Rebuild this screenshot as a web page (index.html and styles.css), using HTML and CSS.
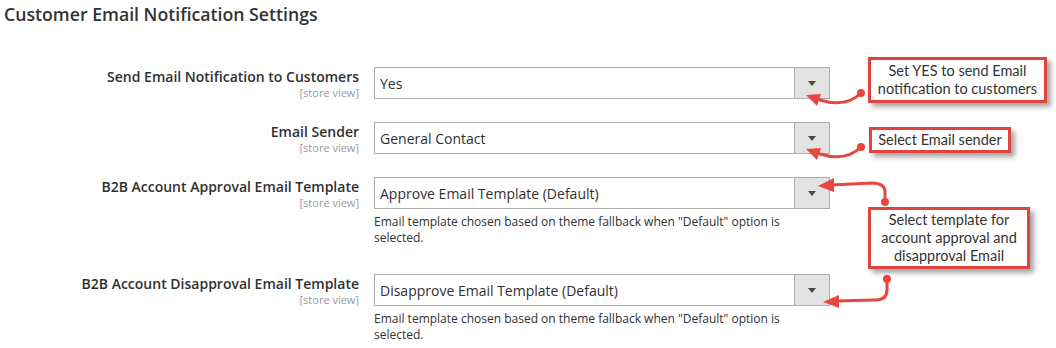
FILE: index.html
```html
<!DOCTYPE html>
<html lang="en">
  <head>
    <meta charset="UTF-8" />
    <title>Customer Email Notification Settings</title>
    <link rel="stylesheet" href="styles.css">
  </head>
  <body>
    <div class="page">
      <h1 class="section-title">Customer Email Notification Settings</h1>

      <div class="fieldset">
        <div class="field">
          <div class="label">
            <span class="label-text">Send Email Notification to Customers</span>
            <span class="scope">[store view]</span>
          </div>
          <div class="control">
            <div class="select">
              <span class="select-value">Yes</span>
              <span class="select-btn"><i class="caret"></i></span>
            </div>
          </div>
        </div>

        <div class="field">
          <div class="label">
            <span class="label-text">Email Sender</span>
            <span class="scope">[store view]</span>
          </div>
          <div class="control">
            <div class="select">
              <span class="select-value">General Contact</span>
              <span class="select-btn"><i class="caret"></i></span>
            </div>
          </div>
        </div>

        <div class="field">
          <div class="label">
            <span class="label-text">B2B Account Approval Email Template</span>
            <span class="scope">[store view]</span>
          </div>
          <div class="control">
            <div class="select">
              <span class="select-value">Approve Email Template (Default)</span>
              <span class="select-btn"><i class="caret"></i></span>
            </div>
            <p class="note">Email template chosen based on theme fallback when "Default" option is selected.</p>
          </div>
        </div>

        <div class="field">
          <div class="label">
            <span class="label-text">B2B Account Disapproval Email Template</span>
            <span class="scope">[store view]</span>
          </div>
          <div class="control">
            <div class="select">
              <span class="select-value">Disapprove Email Template (Default)</span>
              <span class="select-btn"><i class="caret"></i></span>
            </div>
            <p class="note">Email template chosen based on theme fallback when "Default" option is selected.</p>
          </div>
        </div>
      </div>

      <!-- annotation layer -->
      <div class="annotations">
        <svg class="arrows" width="1056" height="348" viewBox="0 0 1056 348">
          <g fill="none" stroke="#e8473f" stroke-width="3" stroke-linecap="round">
            <path d="M861 93 Q846 108 820 100" />
            <path d="M861 147 Q846 162 820 154" />
            <path d="M885 202 L885 192 Q885 183 872 183 L832 185" />
            <path d="M887 279 L887 290 Q887 300 875 300 L836 301" />
          </g>
          <g fill="#e8473f">
            <circle cx="861" cy="93" r="4" />
            <circle cx="861" cy="147" r="4" />
            <circle cx="885" cy="202" r="4" />
            <circle cx="887" cy="279" r="4" />
            <polygon points="806,95 821,94 817,106" />
            <polygon points="806,149 821,148 817,160" />
            <polygon points="818,186 834,178 834,192" />
            <polygon points="823,302 839,295 839,308" />
          </g>
        </svg>
        <div class="callout callout-yes">Set YES to send Email<br />notification to customers</div>
        <div class="callout callout-sender">Select Email sender</div>
        <div class="callout callout-template">Select template for<br />account approval and<br />disapproval Email</div>
      </div>
    </div>
  </body>
</html>
```

FILE: styles.css
```css
body {
  margin: 0;
  background-color: #fff;
  font-family: "Open Sans", Arial, sans-serif;
  color: #303030;
}

.page {
  position: relative;
  width: 1056px;
  height: 348px;
  overflow: hidden;
}

.section-title {
  margin: 0;
  padding: 4px 0 0 4px;
  font-size: 17.7px;
  font-weight: 600;
  line-height: 20px;
  color: #333;
}

.fieldset {
  margin-top: 43px;
}

.field {
  display: grid;
  grid-template-columns: 359px 456px;
  column-gap: 15px;
  margin-bottom: 23px;
}

.label {
  display: flex;
  flex-direction: column;
  align-items: flex-end;
  text-align: right;
}

.label-text {
  font-size: 14px;
  font-weight: 600;
  line-height: 19px;
  color: #303030;
}

.scope {
  font-size: 11px;
  line-height: 13px;
  color: #999;
}

.select {
  display: flex;
  height: 32px;
  border: 1px solid #adadad;
  box-sizing: border-box;
  background-color: #fff;
}

.select-value {
  flex: 1;
  display: flex;
  align-items: center;
  padding-left: 5px;
  font-size: 14px;
  color: #303030;
}

.select-btn {
  width: 34px;
  display: flex;
  align-items: center;
  justify-content: center;
  background-color: #e3e3e3;
  border-left: 1px solid #adadad;
}

.caret {
  width: 0;
  height: 0;
  border-left: 4px solid transparent;
  border-right: 4px solid transparent;
  border-top: 5px solid #514943;
  margin-top: 1px;
}

.note {
  margin: 5px 0 5px 0;
  max-width: 420px;
  font-size: 12px;
  line-height: 16px;
  color: #303030;
}

.annotations {
  position: absolute;
  top: 0;
  left: 0;
  width: 1056px;
  height: 348px;
  pointer-events: none;
}

.arrows {
  position: absolute;
  top: 0;
  left: 0;
}

.callout {
  position: absolute;
  box-sizing: border-box;
  display: flex;
  align-items: center;
  justify-content: center;
  text-align: center;
  border: 3px solid #e0443e;
  background-color: #fff;
  box-shadow: 4px 4px 5px rgba(0, 0, 0, 0.35);
  font-family: Lato, "Open Sans", sans-serif;
  font-size: 14.5px;
  line-height: 18px;
  color: #333;
}

.callout-yes {
  left: 868px;
  top: 57px;
  width: 179px;
  height: 46px;
}

.callout-sender {
  left: 869px;
  top: 127px;
  width: 142px;
  height: 26px;
}

.callout-template {
  left: 868px;
  top: 207px;
  width: 162px;
  height: 62px;
}
```
